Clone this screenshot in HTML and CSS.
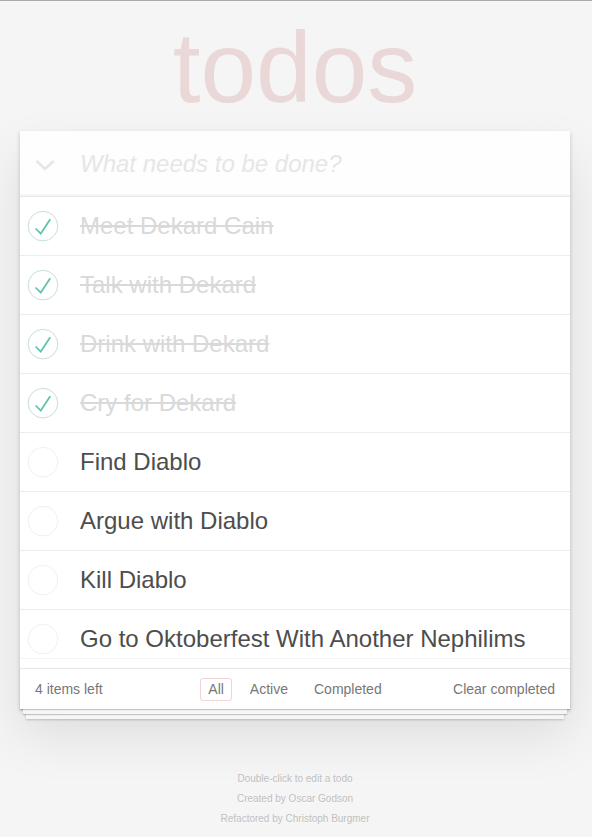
FILE: index.html
```html
<!DOCTYPE html>
<html lang="en">
<head>
<meta charset="utf-8">
<title>todos</title>
<link rel="stylesheet" href="styles.css">
</head>
<body>
<div class="page">
  <h1 class="title">todos</h1>
  <section class="todoapp">
    <header class="new-row">
      <span class="toggle-all">
        <svg width="20" height="12" viewBox="0 0 20 12"><polyline points="1.5,2 10,10 18.5,2" fill="none" stroke="#e6e6e6" stroke-width="2.6"/></svg>
      </span>
      <input class="new-todo" type="text" placeholder="What needs to be done?">
    </header>
    <ul class="todo-list">
      <li class="item completed"><svg class="check" width="40" height="40" viewBox="-10 -18 100 135"><circle cx="50" cy="50" r="50" fill="none" stroke="#bddad5" stroke-width="3"/><path fill="#5dc2af" d="M72 25L42 71 27 56l-4 4 20 20 34-52z"/></svg><span class="label">Meet Dekard Cain</span></li>
      <li class="item completed"><svg class="check" width="40" height="40" viewBox="-10 -18 100 135"><circle cx="50" cy="50" r="50" fill="none" stroke="#bddad5" stroke-width="3"/><path fill="#5dc2af" d="M72 25L42 71 27 56l-4 4 20 20 34-52z"/></svg><span class="label">Talk with Dekard</span></li>
      <li class="item completed"><svg class="check" width="40" height="40" viewBox="-10 -18 100 135"><circle cx="50" cy="50" r="50" fill="none" stroke="#bddad5" stroke-width="3"/><path fill="#5dc2af" d="M72 25L42 71 27 56l-4 4 20 20 34-52z"/></svg><span class="label">Drink with Dekard</span></li>
      <li class="item completed"><svg class="check" width="40" height="40" viewBox="-10 -18 100 135"><circle cx="50" cy="50" r="50" fill="none" stroke="#bddad5" stroke-width="3"/><path fill="#5dc2af" d="M72 25L42 71 27 56l-4 4 20 20 34-52z"/></svg><span class="label">Cry for Dekard</span></li>
      <li class="item"><svg class="check" width="40" height="40" viewBox="-10 -18 100 135"><circle cx="50" cy="50" r="50" fill="none" stroke="#ededed" stroke-width="3"/></svg><span class="label">Find Diablo</span></li>
      <li class="item"><svg class="check" width="40" height="40" viewBox="-10 -18 100 135"><circle cx="50" cy="50" r="50" fill="none" stroke="#ededed" stroke-width="3"/></svg><span class="label">Argue with Diablo</span></li>
      <li class="item"><svg class="check" width="40" height="40" viewBox="-10 -18 100 135"><circle cx="50" cy="50" r="50" fill="none" stroke="#ededed" stroke-width="3"/></svg><span class="label">Kill Diablo</span></li>
      <li class="item last"><svg class="check" width="40" height="40" viewBox="-10 -18 100 135"><circle cx="50" cy="50" r="50" fill="none" stroke="#ededed" stroke-width="3"/></svg><span class="label">Go to Oktoberfest With Another Nephilims</span></li>
    </ul>
    <footer class="footer">
      <span class="todo-count">4 items left</span>
      <ul class="filters">
        <li><a class="filter selected">All</a></li>
        <li><a class="filter">Active</a></li>
        <li><a class="filter">Completed</a></li>
      </ul>
      <span class="clear-completed">Clear completed</span>
    </footer>
  </section>
  <footer class="info">
    <p>Double-click to edit a todo</p>
    <p>Created by Oscar Godson</p>
    <p>Refactored by Christoph Burgmer</p>
  </footer>
</div>
</body>
</html>
```

FILE: styles.css
```css
html, body {
  margin: 0;
  padding: 0;
}

body {
  background: #f5f5f5;
  border-top: 1px solid #aaaaaa;
  padding-right: 2px;
  font: 14px "Liberation Sans", Arial, sans-serif;
  color: #4d4d4d;
}

.page {
  max-width: 550px;
  margin: 0 auto;
}

.title {
  margin: 0;
  height: 130px;
  box-sizing: border-box;
  padding-top: 16px;
  font-size: 100px;
  line-height: 100px;
  font-weight: 100;
  text-align: center;
  color: rgba(175, 47, 47, 0.15);
}

.todoapp {
  background: #fff;
  box-shadow: 0 2px 4px 0 rgba(0, 0, 0, 0.2), 0 25px 50px 0 rgba(0, 0, 0, 0.1);
}

.new-row {
  display: flex;
  align-items: center;
  height: 65px;
  background: rgba(0, 0, 0, 0.003);
  box-shadow: inset 0 -2px 1px rgba(0, 0, 0, 0.03);
}

.toggle-all {
  display: flex;
  width: 60px;
  padding-left: 15px;
  box-sizing: border-box;
  padding-top: 3px;
}

.new-todo {
  flex: 1;
  min-width: 0;
  height: 65px;
  box-sizing: border-box;
  margin: 0;
  padding: 0 16px 0 0;
  border: none;
  background: transparent;
  font: 24px "Liberation Sans", Arial, sans-serif;
  color: #4d4d4d;
  outline: none;
}

.new-todo::placeholder {
  font-style: italic;
  color: #e6e6e6;
}

.todo-list {
  margin: 0;
  padding: 0;
  list-style: none;
  border-top: 1px solid #e6e6e6;
}

.item {
  display: flex;
  align-items: center;
  height: 58px;
  border-bottom: 1px solid #ededed;
  font-size: 24px;
}

.item.last {
  border-bottom: none;
  background: linear-gradient(to bottom, transparent 48px, #f3f3f3 48px, #f3f3f3 49px, transparent 49px);
}

.check {
  flex: none;
  display: block;
}

.label {
  margin-left: 20px;
  line-height: 28px;
  white-space: nowrap;
}

.completed .label {
  color: #d9d9d9;
  text-decoration: line-through;
}

.footer {
  display: grid;
  grid-template-columns: 1fr auto 1fr;
  grid-template-rows: 20px;
  align-items: center;
  height: 20px;
  padding: 10px 15px;
  border-top: 1px solid #e6e6e6;
  color: #777;
  line-height: 18px;
  box-shadow: 0 1px 1px rgba(0, 0, 0, 0.2),
              0 8px 0 -3px #f6f6f6,
              0 9px 1px -3px rgba(0, 0, 0, 0.2),
              0 16px 0 -6px #f6f6f6,
              0 17px 2px -6px rgba(0, 0, 0, 0.2);
}

.todo-count {
  justify-self: start;
}

.filters {
  display: flex;
  gap: 4px;
  margin: 0;
  padding: 0;
  list-style: none;
  align-self: center;
}

.filter {
  display: block;
  margin: 0 3px;
  padding: 3px 7px;
  line-height: 15px;
  border: 1px solid transparent;
  border-radius: 3px;
}

.filter.selected {
  border-color: rgba(175, 47, 47, 0.2);
}

.clear-completed {
  justify-self: end;
}

.info {
  padding-top: 65px;
  color: #bfbfbf;
  font-size: 10px;
  text-align: center;
  text-shadow: 0 1px 0 rgba(255, 255, 255, 0.5);
}

.info p {
  margin: 0 0 10px;
  line-height: 10px;
}
```
